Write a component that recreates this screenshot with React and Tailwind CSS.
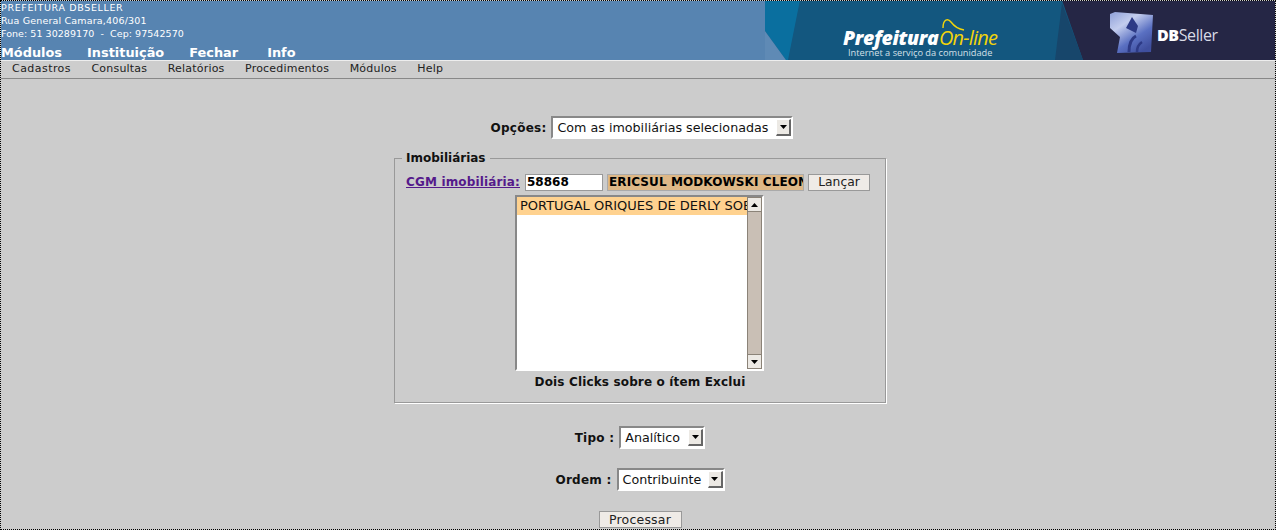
import React from 'react';

const menuTop = ['Módulos', 'Instituição', 'Fechar'];
const menuBar = ['Consultas', 'Relatórios', 'Procedimentos', 'Módulos', 'Help'];

const Arrow = ({ up }) => (
  <svg width="7" height="4" viewBox="0 0 7 4" className="block">
    <path d={up ? 'M3.5 0L7 4H0Z' : 'M0 0H7L3.5 4Z'} fill="#000" />
  </svg>
);

// select antigo do navegador, borda afundada e botao com seta
const Select = ({ label, value, width }) => (
  <div className="flex items-center justify-center">
    <span className="font-bold text-[12px] tracking-[0.25px] text-[#111] mr-[5px]">{label}</span>
    <div
      className="h-[23px] flex items-center justify-between bg-white border-2 border-t-[#888] border-l-[#888] border-r-white border-b-white pl-1"
      style={{ width }}
    >
      <span className="text-[12.7px] text-[#111] whitespace-nowrap">{value}</span>
      <span className="w-[15px] h-[17px] flex items-center justify-center bg-[#ece9e4] border-r-2 border-b-2 border-r-[#666] border-b-[#666] border-t border-l border-t-white border-l-white">
        <Arrow />
      </span>
    </div>
  </div>
);

const Banner = () => (
  <div className="w-[510px] h-[59px] shrink-0 relative overflow-hidden bg-[#13577f]">
    <svg width="510" height="59" viewBox="0 1 510 59" className="absolute inset-0">
      <defs>
        <linearGradient id="dbIcon" x1="0" y1="0" x2="0.7" y2="1">
          <stop offset="0" stopColor="#8e9fd8" />
          <stop offset="0.35" stopColor="#c3cdee" />
          <stop offset="0.7" stopColor="#5a70c2" />
          <stop offset="1" stopColor="#3f4f9e" />
        </linearGradient>
      </defs>
      <rect y="0" width="510" height="60" fill="#13577f" />
      <path d="M0 0H35L23 60H21L0 31Z" fill="#0a6f9f" />
      <path d="M0 31L21 60H0Z" fill="#5f8ab5" />
      <path d="M297 0H510V60H318Z" fill="#252645" />
      <path d="M297 3L318 60H290Z" fill="#17466b" />
      <path d="M345 14L350 12L388 15L386 52L352 53L355 37L345 28Z" fill="url(#dbIcon)" />
      <path d="M367 17L373 26L371 33L361 28Z" fill="#2d3a86" />
      <path d="M364 52C364 44 367 38 371 36" stroke="#2d3a86" strokeWidth="3" fill="none" />
      <path d="M372 52C372 47 374 44 377 42" stroke="#2d3a86" strokeWidth="2.5" fill="none" />
      <path d="M178 28C178 19 183 18 186 22C189 26 192 29 199 30" stroke="#f2d40a" strokeWidth="1.4" fill="none" />
    </svg>
    <span className="absolute left-[78px] top-[24px] text-[19.5px] leading-[26px] font-extrabold italic text-white font-['Open_Sans',sans-serif] tracking-[-0.35px]">Prefeitura</span>
    <span className="absolute left-[174px] top-[24px] text-[20px] leading-[26px] italic text-[#f2d40a] font-['Open_Sans',sans-serif] tracking-[-0.8px]">On-line</span>
    <span className="absolute left-[83px] top-[46px] text-[9.25px] leading-[12px] text-[#d5e0e8] font-['Open_Sans',sans-serif]">Internet a serviço da comunidade</span>
    <span className="absolute left-[392px] top-[24px] text-[16px] leading-[20px] text-[#d9dbe6] font-['Open_Sans',sans-serif] tracking-[-0.4px]"><b className="text-white font-extrabold">DB</b>Seller</span>
  </div>
);

export default function App() {
  return (
    <div className="relative w-[1276px] h-[530px] overflow-hidden bg-[#cccccc] border border-dotted border-black font-['DejaVu_Sans',sans-serif] text-[#111] flex flex-col">
      {/* linha pontilhada colorida sobre o topo */}
      <div className="absolute -top-px left-0 w-[1094px] h-px bg-[#5784b1] border-t border-dotted border-t-[#c08548]" />

      {/* topo */}
      <div className="h-[59px] shrink-0 flex justify-between bg-[#5784b1]">
        <div className="text-white">
          <div className="text-[9.5px] leading-[13px] tracking-[0.65px]">PREFEITURA DBSELLER</div>
          <div className="text-[9.5px] leading-[13px] tracking-[0.17px]">Rua General Camara,406/301</div>
          <div className="text-[9.5px] leading-[13px] tracking-[0.05px] whitespace-pre">Fone: 51 30289170  -  Cep: 97542570</div>
          <div className="flex gap-[25px] mt-[5px] text-[12.9px] leading-[16px] font-bold">
            {menuTop.map(m => <span key={m}>{m}</span>)}
            <span className="ml-[4px]">Info</span>
          </div>
        </div>
        <Banner />
      </div>

      {/* menu */}
      <div className="h-[19px] shrink-0 bg-[#cdcdcd] border-t border-t-[#eee] border-b border-b-[#888] flex items-center pl-[11px] gap-[20.5px] text-[11px] tracking-[0.2px] text-[#222]">
        <span className="tracking-[0.45px]">Cadastros</span>
        {menuBar.map(m => <span key={m}>{m}</span>)}
      </div>

      {/* form */}
      <div className="flex flex-col items-center pt-[37px] pl-[4px]">
        <div className="ml-[4px]"><Select label="Opções:" value="Com as imobiliárias selecionadas" width="242px" /></div>

        <fieldset className="w-[492px] h-[250px] mt-[14px] border border-[#999] shadow-[1px_1px_0_#fff]">
          <legend className="ml-[7px] px-[4px] font-bold text-[12px] leading-[10px] text-[#111]">Imobiliárias</legend>
          <div className="flex items-center pl-[11px] pt-[10px]">
            <a className="font-bold text-[12px] tracking-[0.15px] underline text-[#551a8b] mr-[5px]">CGM imobiliária:</a>
            <div className="w-[78px] h-[17px] bg-white border border-[#999] pl-[1px] font-bold text-[12px] leading-[15px] text-black">58868</div>
            <div className="w-[197px] h-[17px] ml-[4px] bg-[#deb887] border border-[#aaa] pl-[1px] font-bold text-[12px] tracking-[0.1px] leading-[15px] text-black overflow-hidden whitespace-nowrap">ERICSUL MODKOWSKI CLEONICE</div>
            <div className="w-[62px] h-[17px] ml-[4px] bg-[#efebe7] border border-[#999] text-[12.3px] leading-[15px] text-center text-[#222]">Lançar</div>
          </div>
          <div className="ml-[120px] mt-[4px] w-[249px] h-[176px] bg-white border-2 border-t-[#888] border-l-[#888] border-r-white border-b-white flex">
            <div className="flex-1 min-w-0 overflow-hidden">
              <div className="h-[18px] bg-[#ffd28f] pl-[3px] text-[13px] leading-[18px] whitespace-nowrap text-[#111]">PORTUGAL ORIQUES DE DERLY SOBRINHO</div>
            </div>
            <div className="w-[15px] bg-[#c9bfb5] border-x border-x-[#8b8378] flex flex-col justify-between">
              <span className="h-[15px] -mx-px flex items-center justify-center bg-[#ece9e4] border border-[#8b8378]"><Arrow up /></span>
              <span className="h-[15px] -mx-px flex items-center justify-center bg-[#ece9e4] border border-[#8b8378]"><Arrow /></span>
            </div>
          </div>
          <div className="text-center font-bold text-[12px] tracking-[0.15px] leading-[14px] mt-[4px] text-[#111]">Dois Clicks sobre o ítem Exclui</div>
        </fieldset>

        <div className="mt-[23px]"><Select label="Tipo :" value="Analítico" width="86px" /></div>
        <div className="mt-[19px]"><Select label="Ordem :" value="Contribuinte" width="108px" /></div>
        <div className="mt-[20px] w-[83px] h-[17px] bg-[#efebe7] border border-[#999] text-[12.5px] leading-[15px] text-center tracking-[0.2px] text-[#222]">Processar</div>
      </div>
    </div>
  );
}
